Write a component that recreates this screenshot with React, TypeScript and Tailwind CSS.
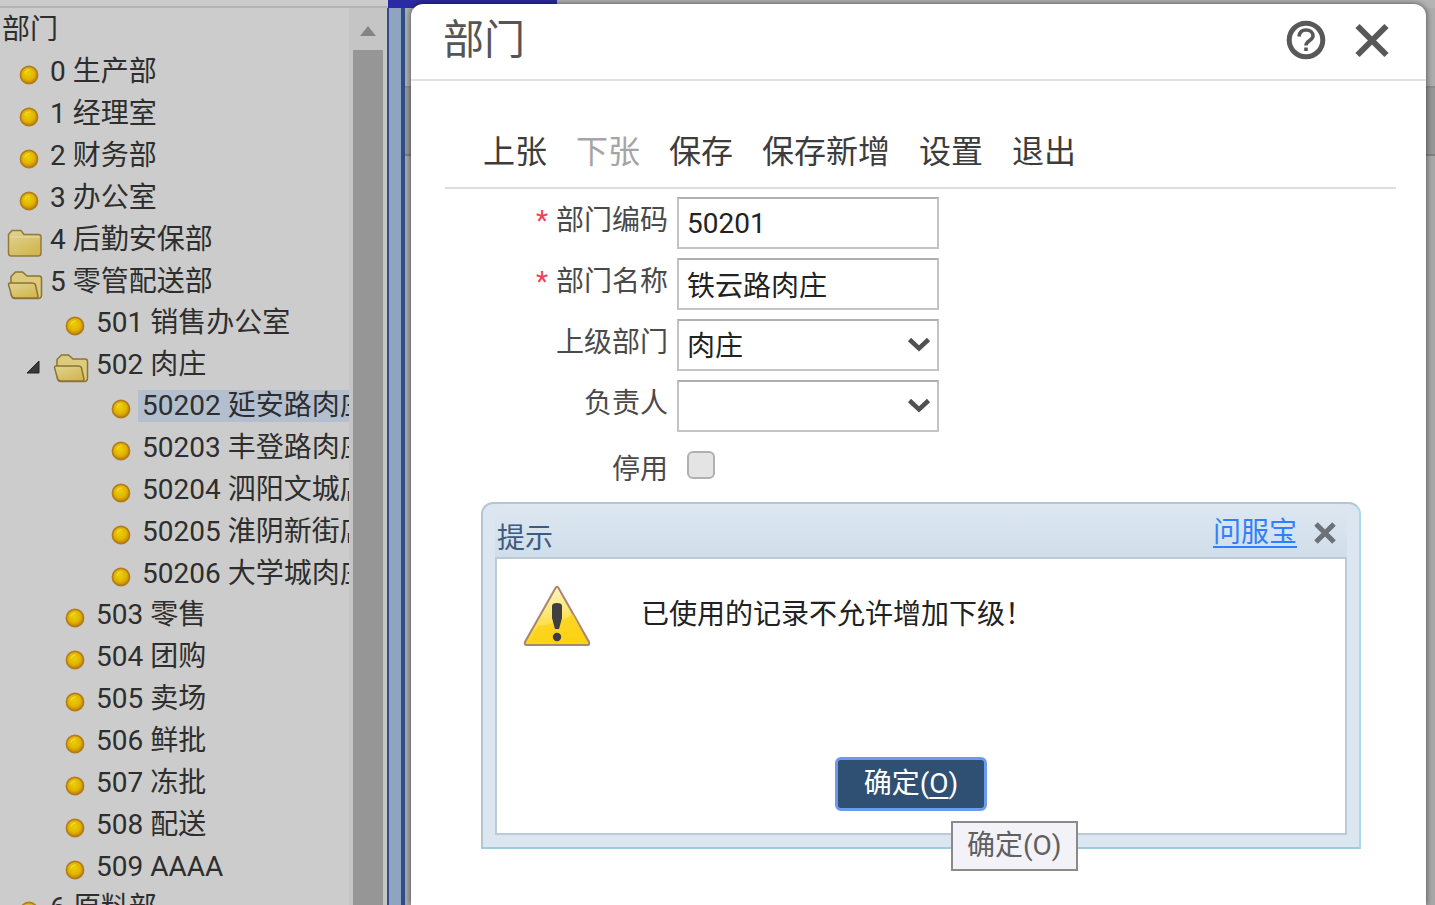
import React, { useState } from 'react';

interface Department {
  code: string;
  name: string;
  folder?: 'open' | 'closed';
  arrow?: boolean;
  children?: Department[];
}

const departments: Department[] = [
  { code: '0', name: '生产部' },
  { code: '1', name: '经理室' },
  { code: '2', name: '财务部' },
  { code: '3', name: '办公室' },
  { code: '4', name: '后勤安保部', folder: 'closed' },
  {
    code: '5',
    name: '零管配送部',
    folder: 'open',
    children: [
      { code: '501', name: '销售办公室' },
      {
        code: '502',
        name: '肉庄',
        folder: 'open',
        arrow: true,
        children: [
          { code: '50202', name: '延安路肉庄' },
          { code: '50203', name: '丰登路肉庄' },
          { code: '50204', name: '泗阳文城店' },
          { code: '50205', name: '淮阴新街店' },
          { code: '50206', name: '大学城肉庄' },
        ],
      },
      { code: '503', name: '零售' },
      { code: '504', name: '团购' },
      { code: '505', name: '卖场' },
      { code: '506', name: '鲜批' },
      { code: '507', name: '冻批' },
      { code: '508', name: '配送' },
      { code: '509', name: 'AAAA' },
    ],
  },
  { code: '6', name: '原料部' },
];

const toolbar = [
  { label: '上张' },
  { label: '下张', disabled: true },
  { label: '保存' },
  { label: '保存新增' },
  { label: '设置' },
  { label: '退出' },
];

const DotIcon = () => (
  <svg className="h-5 w-5" viewBox="0 0 20 20">
    <defs>
      <radialGradient id="dot" cx="0.45" cy="0.4" r="0.6">
        <stop offset="0" stopColor="#ecd000" />
        <stop offset="0.6" stopColor="#e0b400" />
        <stop offset="1" stopColor="#c08000" />
      </radialGradient>
    </defs>
    <circle cx="10" cy="10" r="8.6" fill="url(#dot)" stroke="#b27b1c" strokeWidth="1.6" />
    <path d="M6 8.5a5 5 0 0 1 5-3.5" fill="none" stroke="#f0dc50" strokeWidth="1.2" />
  </svg>
);

const FolderIcon = ({ open }: { open: boolean }) => (
  <svg className="h-[30px] w-9" viewBox="0 0 36 30">
    <defs>
      <linearGradient id="folder" x1="0" y1="0" x2="0.7" y2="1">
        <stop offset="0" stopColor="#e0d494" />
        <stop offset="1" stopColor="#d2b650" />
      </linearGradient>
    </defs>
    {open ? (
      <>
        <path
          d="M4 13V6.5L8.5 2h7l4.5 4H32q2.5 0 2.5 2.5V25q0 3.5-3.5 3.5H8q-3 0-3.500-3z"
          fill="#dccb7c"
          stroke="#8c7334"
          strokeWidth="1.5"
        />
        <path
          d="M1.5 14.500q0-1.500 1.500-1.500H25q3 0 3.500 2l2.500 11q0 2-2 2H8q-3 0-3.500-2.500z"
          fill="url(#folder)"
          stroke="#8c7334"
          strokeWidth="1.5"
        />
      </>
    ) : (
      <>
        <path
          d="M1.5 6.500L5 2.500h9l3 4h14.500q2.500 0 2.500 2.500v16q0 3-3 3H4.500q-3 0-3-3z"
          fill="url(#folder)"
          stroke="#94793a"
          strokeWidth="1.5"
        />
        <path d="M3 9h29" stroke="#e4da9e" strokeWidth="1.2" />
      </>
    )}
  </svg>
);

const WarningIcon = () => (
  <svg className="h-[62px] w-[68px] shrink-0" viewBox="0 0 68 62">
    <defs>
      <linearGradient id="warn" x1="0" y1="0" x2="0.2" y2="1">
        <stop offset="0" stopColor="#fff9d8" />
        <stop offset="0.55" stopColor="#fbe56a" />
        <stop offset="1" stopColor="#fdd30a" />
      </linearGradient>
    </defs>
    <path
      d="M32.500 3q1.500-2.500 3 0L66 57q1 3-1.500 3H3.500Q1 60 2 57z"
      fill="url(#warn)"
      stroke="#ab8570"
      strokeWidth="2"
    />
    <path d="M6 57L15 41q20-2 35-12L64 57z" fill="#fcd116" opacity="0.75" />
    <path d="M29 21q0-3 5-3t5 3v12l-3 11h-4l-3-11z" fill="#3f3f42" />
    <circle cx="34" cy="52" r="4.2" fill="#3c3d46" />
  </svg>
);

const TreeNode: React.FC<{
  node: Department;
  selected: string;
  onSelect: (code: string) => void;
}> = ({ node, selected, onSelect }) => (
  <li className="relative">
    {node.arrow && (
      <svg className="absolute top-4 -left-5 h-[15px] w-[15px]" viewBox="0 0 15 15">
        <path d="M13 1v12H1z" fill="#3a3a3a" stroke="#222" strokeWidth="1" />
      </svg>
    )}
    <div className="flex h-[42px] items-center">
      <span
        className={`flex w-[46px] shrink-0 items-center justify-center pt-[5px] ${
          node.folder ? 'pl-1' : 'pl-[11px]'
        }`}
      >
        {node.folder ? <FolderIcon open={node.folder === 'open'} /> : <DotIcon />}
      </span>
      <button
        type="button"
        onClick={() => onSelect(node.code)}
        className={`h-8 grow px-1 text-left leading-8 whitespace-nowrap ${
          selected === node.code ? 'bg-[#b3bfcf]' : ''
        }`}
      >
        {node.code} {node.name}
      </button>
    </div>
    {node.children && (
      <ul className="-my-px pl-[46px]">
        {node.children.map((child) => (
          <TreeNode key={child.code} node={child} selected={selected} onSelect={onSelect} />
        ))}
      </ul>
    )}
  </li>
);

const labelClass = 'leading-[48px] text-right text-[#4a4a4a] whitespace-nowrap';
const fieldClass =
  'h-[52px] w-full appearance-none rounded-none border-2 border-[#c4c4c4] border-t-[#b0b0b0] bg-white px-2 text-[#222] outline-none';

const FieldLabel: React.FC<{ id: string; required?: boolean; children: React.ReactNode }> = ({
  id,
  required,
  children,
}) => (
  <label htmlFor={id} className={labelClass}>
    {required && <span className="mr-2 text-[#f0405a]">*</span>}
    {children}
  </label>
);

const SelectField: React.FC<{ id: string; options: string[] }> = ({ id, options }) => (
  <div className="relative">
    <select id={id} className={`${fieldClass} pt-1`}>
      {options.map((option) => (
        <option key={option}>{option}</option>
      ))}
    </select>
    <svg
      className="pointer-events-none absolute top-[18px] right-2 h-4 w-6"
      viewBox="0 0 24 16"
      fill="none"
      stroke="#505050"
      strokeWidth="4.5"
    >
      <path d="M2.5 2.5L12 11.500L21.500 2.500" />
    </svg>
  </div>
);

const AlertBox = () => (
  <section className="relative mt-[11px] mr-[35px] ml-9 rounded-t-xl border-2 border-[#b5c6d3] border-r-[#a9d9ec] border-b-[#9fcbdc] bg-[#dce6f1] px-3 pb-3">
    <header className="flex h-[53px] items-center justify-between rounded-t-xl bg-linear-to-b from-[#dde7f2] to-[#d0dee9] pt-1 pl-[2px]">
      <h2 className="pt-3 text-[#3f5a80]">提示</h2>
      <div className="flex items-center gap-4 pr-[10px]">
        <a href="#help" className="text-[#2f80ff] underline decoration-2 underline-offset-4">
          问服宝
        </a>
        <button type="button" aria-label="关闭提示">
          <svg className="h-6 w-6" viewBox="0 0 24 24" fill="none" stroke="#6c7178" strokeWidth="5">
            <path d="M3 3L21 21M21 3L3 21" />
          </svg>
        </button>
      </div>
    </header>
    <div className="flex h-[278px] flex-col border-2 border-[#bccad8] bg-white px-[26px] pt-[26px] pb-[22px]">
      <div className="flex grow items-start gap-[50px]">
        <WarningIcon />
        <p className="leading-[60px] text-[#222]">已使用的记录不允许增加下级！</p>
      </div>
      <div className="flex justify-center pr-5">
        <button
          type="button"
          className="h-[54px] w-[152px] rounded-md border-[3px] border-[#6c9bee] bg-[#2f4f73] text-white"
        >
          确定(<span className="underline underline-offset-4">O</span>)
        </button>
      </div>
    </div>
    <div
      role="tooltip"
      className="absolute -bottom-6 left-[468px] flex h-[50px] items-center border-2 border-[#8a8a8a] bg-[#f2f2f8] px-[14px] text-[#606060]"
    >
      确定(O)
    </div>
  </section>
);

export default function App() {
  const [selected, setSelected] = useState('50202');
  const [code, setCode] = useState('50201');
  const [name, setName] = useState('铁云路肉庄');
  const [disabled, setDisabled] = useState(false);

  return (
    <div className="relative flex h-screen flex-col overflow-hidden bg-[#cccccc] font-[Roboto,'Noto_Sans_CJK_SC',sans-serif] text-[28px] leading-[42px] text-[#2e2e2e]">
      <div className="flex h-2 shrink-0 border-b-2 border-[#b4b4b4]">
        <div className="w-[388px] shrink-0 bg-[#cbcbcb]" />
        <div className="h-2 w-[169px] shrink-0 bg-[#2a2aa5]" />
        <div className="grow bg-[#b4b4b4]" />
      </div>

      <div className="flex min-h-0 grow">
        <nav className="w-[349px] shrink-0 overflow-hidden pt-px">
          <h2 className="pl-[2px]">部门</h2>
          <ul>
            {departments.map((node) => (
              <TreeNode key={node.code} node={node} selected={selected} onSelect={setSelected} />
            ))}
          </ul>
        </nav>
        <div className="flex w-[38px] shrink-0 flex-col items-center bg-[#c5c5c5]">
          <div className="flex h-[42px] shrink-0 items-center justify-center pt-1">
            <svg className="h-[10px] w-4" viewBox="0 0 16 10">
              <path d="M8 0L16 10H0z" fill="#858585" />
            </svg>
          </div>
          <div className="w-[30px] grow bg-[#969696]" />
        </div>
        <div className="w-[18px] shrink-0 border-r-4 border-l-2 border-[#2f4d8d] bg-[#8fa4c0]" />
        <div className="flex grow flex-col bg-[#a8a8a8]">
          <div className="h-20 border-b-2 border-[#8c8c8c] bg-[#adadad]" />
          <div className="h-[68px] border-b-2 border-[#808080] bg-[#979797]" />
        </div>
      </div>

      <main className="absolute top-1 right-[9px] bottom-0 left-[411px] rounded-t-xl bg-white shadow-[0_0_6px_rgba(0,0,0,0.6)]">
        <header className="flex h-[77px] items-center justify-between border-b-2 border-[#e2e2e2] pr-9 pb-1 pl-8">
          <h1 className="text-[41px] leading-[60px] text-[#555]">部门</h1>
          <div className="flex items-center gap-7">
            <button type="button" aria-label="帮助">
              <svg className="h-10 w-10" viewBox="0 0 40 40" fill="none" stroke="#585858">
                <circle cx="20" cy="20" r="16.8" strokeWidth="5" />
                <path
                  d="M13 16.500C13.500 11.800 16.500 10 20 10C24 10 27 12.500 27 16C27 20.500 20 20.500 20 25.500"
                  strokeWidth="3.6"
                />
                <path d="M20 27.500V31" strokeWidth="3.6" />
              </svg>
            </button>
            <button type="button" aria-label="关闭">
              <svg className="h-9 w-9" viewBox="0 0 36 36" fill="none" stroke="#585858" strokeWidth="6">
                <path d="M3.5 4L32.500 33M32.500 4L3.500 33" />
              </svg>
            </button>
          </div>
        </header>

        <div className="pr-[30px] pl-[34px]">
          <div className="flex h-[108px] items-center gap-[29px] border-b-2 border-[#dedede] pt-9 pl-[38px] text-[32px]">
            {toolbar.map((item) => (
              <button
                key={item.label}
                type="button"
                disabled={item.disabled}
                className={item.disabled ? 'text-[#a5a5a5]' : 'text-[#3c3c3c]'}
              >
                {item.label}
              </button>
            ))}
          </div>

          <form className="grid grid-cols-[223px_262px] gap-x-[9px] gap-y-[9px] pt-2">
            <FieldLabel id="code" required>
              部门编码
            </FieldLabel>
            <input id="code" className={fieldClass} value={code} onChange={(e) => setCode(e.target.value)} />
            <FieldLabel id="name" required>
              部门名称
            </FieldLabel>
            <input id="name" className={fieldClass} value={name} onChange={(e) => setName(e.target.value)} />
            <FieldLabel id="parent">上级部门</FieldLabel>
            <SelectField id="parent" options={['肉庄', '零管配送部']} />
            <FieldLabel id="manager">负责人</FieldLabel>
            <SelectField id="manager" options={['']} />
            <label htmlFor="disabled" className="pt-2 text-right text-[#4a4a4a]">
              停用
            </label>
            <div className="flex items-start pt-[10px] pl-[10px]">
              <input
                id="disabled"
                type="checkbox"
                checked={disabled}
                onChange={(e) => setDisabled(e.target.checked)}
                className="h-7 w-7 appearance-none rounded-md border-2 border-[#b0b0b0] bg-[#e4e4e4] checked:bg-[#2f4f73]"
              />
            </div>
          </form>

          <AlertBox />
        </div>
      </main>
    </div>
  );
}
